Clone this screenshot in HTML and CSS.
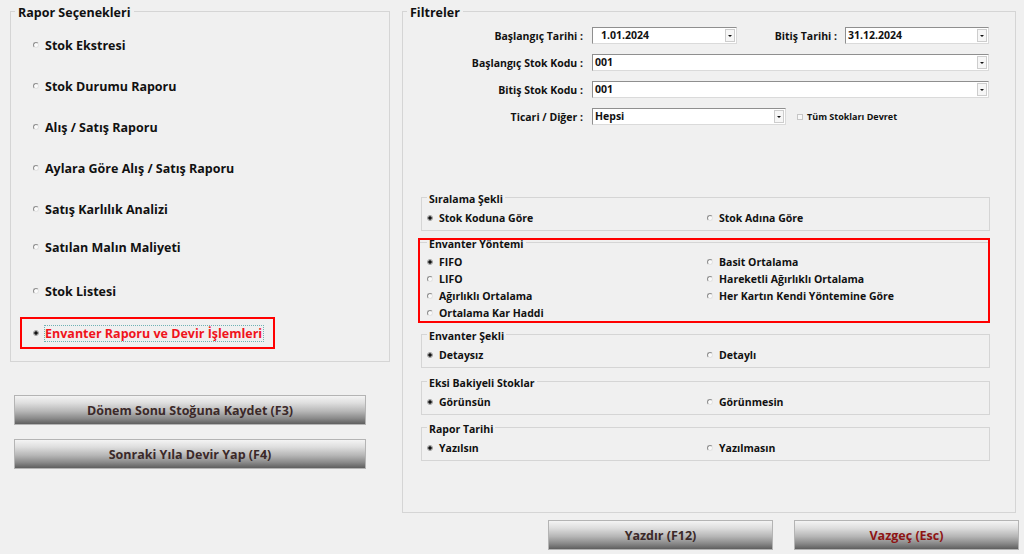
FILE: index.html
```html
<!DOCTYPE html>
<html lang="tr">
<head>
<meta charset="utf-8">
<title>Envanter Raporu</title>
<link rel="stylesheet" href="styles.css">
</head>
<body>
<div class="window">
  <div class="main">
    <div class="left-col">
      <fieldset class="group">
        <legend>Rapor Seçenekleri</legend>
        <div class="report-list">
          <div class="report-item"><span class="radio"></span>Stok Ekstresi</div>
          <div class="report-item"><span class="radio"></span>Stok Durumu Raporu</div>
          <div class="report-item"><span class="radio"></span>Alış / Satış Raporu</div>
          <div class="report-item"><span class="radio"></span>Aylara Göre Alış / Satış Raporu</div>
          <div class="report-item"><span class="radio"></span>Satış Karlılık Analizi</div>
          <div class="report-item report-item--up"><span class="radio"></span>Satılan Malın Maliyeti</div>
          <div class="report-item report-item--down"><span class="radio"></span>Stok Listesi</div>
          <div class="report-selected"><span class="radio checked"></span><span class="focus">Envanter Raporu ve Devir İşlemleri</span></div>
        </div>
      </fieldset>
      <button class="btn btn-side btn-first">Dönem Sonu Stoğuna Kaydet (F3)</button>
      <button class="btn btn-side btn-second">Sonraki Yıla Devir Yap (F4)</button>
    </div>

    <fieldset class="group group-filters">
      <legend>Filtreler</legend>
      <div class="filters-body">
        <div class="filter-form">
          <div class="frow">
            <span class="flabel">Başlangıç Tarihi :</span>
            <div class="combo combo-date combo-pad"><span class="combo-text">1.01.2024</span><span class="combo-btn"></span></div>
            <span class="flabel flabel-end">Bitiş Tarihi :</span>
            <div class="combo combo-date2"><span class="combo-text">31.12.2024</span><span class="combo-btn"></span></div>
          </div>
          <div class="frow">
            <span class="flabel">Başlangıç Stok Kodu :</span>
            <div class="combo combo-full"><span class="combo-text">001</span><span class="combo-btn"></span></div>
          </div>
          <div class="frow">
            <span class="flabel">Bitiş Stok Kodu :</span>
            <div class="combo combo-full"><span class="combo-text">001</span><span class="combo-btn"></span></div>
          </div>
          <div class="frow">
            <span class="flabel">Ticari / Diğer :</span>
            <div class="combo combo-mid"><span class="combo-text">Hepsi</span><span class="combo-btn"></span></div>
            <span class="check"></span><span class="check-label">Tüm Stokları Devret</span>
          </div>
        </div>

        <fieldset class="subgroup subgroup-first">
          <legend>Sıralama Şekli</legend>
          <div class="opts">
            <div class="opt"><span class="radio checked"></span>Stok Koduna Göre</div>
            <div class="opt"><span class="radio"></span>Stok Adına Göre</div>
          </div>
        </fieldset>

        <div class="highlight">
          <fieldset class="subgroup-inner">
            <legend>Envanter Yöntemi</legend>
            <div class="opts opts-method">
              <div class="opt"><span class="radio checked"></span>FIFO</div>
              <div class="opt"><span class="radio"></span>LIFO</div>
              <div class="opt"><span class="radio"></span>Ağırlıklı Ortalama</div>
              <div class="opt"><span class="radio"></span>Ortalama Kar Haddi</div>
              <div class="opt"><span class="radio"></span>Basit Ortalama</div>
              <div class="opt"><span class="radio"></span>Hareketli Ağırlıklı Ortalama</div>
              <div class="opt"><span class="radio"></span>Her Kartın Kendi Yöntemine Göre</div>
            </div>
          </fieldset>
        </div>

        <fieldset class="subgroup subgroup-shape">
          <legend>Envanter Şekli</legend>
          <div class="opts">
            <div class="opt"><span class="radio checked"></span>Detaysız</div>
            <div class="opt"><span class="radio"></span>Detaylı</div>
          </div>
        </fieldset>

        <fieldset class="subgroup subgroup-neg">
          <legend>Eksi Bakiyeli Stoklar</legend>
          <div class="opts">
            <div class="opt"><span class="radio checked"></span>Görünsün</div>
            <div class="opt"><span class="radio"></span>Görünmesin</div>
          </div>
        </fieldset>

        <fieldset class="subgroup subgroup-date">
          <legend>Rapor Tarihi</legend>
          <div class="opts">
            <div class="opt"><span class="radio checked"></span>Yazılsın</div>
            <div class="opt"><span class="radio"></span>Yazılmasın</div>
          </div>
        </fieldset>
      </div>
    </fieldset>
  </div>

  <div class="footer">
    <button class="btn btn-foot">Yazdır (F12)</button>
    <button class="btn btn-foot btn-cancel">Vazgeç (Esc)</button>
  </div>
</div>
</body>
</html>
```

FILE: styles.css
```css
html, body {
  margin: 0;
  padding: 0;
}

body {
  background: #f0f0f0;
  font-family: "Open Sans", "Noto Sans", sans-serif;
  color: #111;
}

.window {
  width: 1024px;
  height: 554px;
  box-sizing: border-box;
  padding: 2px 5px 0 10px;
  display: flex;
  flex-direction: column;
  overflow: hidden;
}

.main {
  display: flex;
  align-items: flex-start;
  gap: 12px;
}

.left-col {
  width: 380px;
  display: flex;
  flex-direction: column;
}

/* group boxes */
.group {
  margin: 0;
  padding: 0;
  min-width: 0;
  border: 1px solid #d5d5d5;
  box-sizing: border-box;
}

.group > legend {
  font-size: 12.5px;
  font-weight: 700;
  line-height: 16px;
  padding: 3px 3px 0;
  margin-left: 4px;
}

/* report list */
.report-list {
  display: flex;
  flex-direction: column;
  gap: 21px;
  padding: 14px 0 12px 22px;
}

.report-item {
  display: flex;
  align-items: center;
  gap: 6px;
  height: 20px;
  font-size: 12.5px;
  font-weight: 700;
}

.report-item--up {
  margin-top: -3px;
}

.report-item--down {
  margin-top: 3px;
}

.report-selected {
  display: flex;
  align-items: center;
  gap: 5px;
  width: 255px;
  height: 32px;
  box-sizing: border-box;
  margin: -5px 0 0 -13px;
  padding-left: 11px;
  border: 2px solid #ff0000;
  font-size: 12.5px;
  font-weight: 700;
  color: #f0141c;
}

.focus {
  border: 1px dotted #6fb2b4;
  line-height: 15px;
  padding-right: 1px;
}

/* radios & checkbox */
.radio {
  flex: none;
  width: 6px;
  height: 6px;
  box-sizing: border-box;
  border-radius: 50%;
  border: 1px solid;
  border-color: #8e8e8e #e4e4e4 #e4e4e4 #8e8e8e;
  background: #fbfbfb;
}

.radio.checked {
  border-color: #9a9a9a;
  background: radial-gradient(circle, #111 0, #111 1.4px, #d8d8d8 2.2px);
}

.check {
  width: 6px;
  height: 6px;
  box-sizing: border-box;
  border: 1px solid #c6c6c6;
  background: #f8f8f8;
  margin-left: 11px;
}

.check-label {
  margin-left: 4px;
  font-size: 9px;
  font-weight: 700;
}

/* buttons */
.btn {
  display: block;
  margin: 0;
  padding: 0;
  height: 30px;
  box-sizing: border-box;
  border: 1px solid #b4b4b4;
  background: linear-gradient(#f4f4f4 0%, #dedede 25%, #b6b6b6 55%, #8a8a8a 80%, #5f5f5f 100%);
  font-family: "Open Sans", "Noto Sans", sans-serif;
  font-size: 12.5px;
  font-weight: 700;
  color: #3b2929;
  text-align: center;
}

.btn-side {
  width: 352px;
  margin-left: 4px;
}

.btn-first {
  margin-top: 33px;
}

.btn-second {
  margin-top: 14px;
}

/* filters */
.group-filters {
  width: 614px;
}

.filters-body {
  padding: 6px 0 51px 0;
}

.filter-form {
  display: flex;
  flex-direction: column;
  gap: 10px;
}

.frow {
  display: flex;
  align-items: center;
  height: 17px;
}

.flabel {
  width: 180px;
  margin-right: 9px;
  text-align: right;
  font-size: 10.5px;
  font-weight: 700;
  white-space: nowrap;
}

.flabel-end {
  width: 100px;
  margin-right: 8px;
}

.combo {
  display: flex;
  align-items: center;
  height: 17px;
  box-sizing: border-box;
  border: 1px solid;
  border-color: #8f8f8f #dadada #dadada #8f8f8f;
  background: #fff;
}

.combo-text {
  flex: 1;
  padding-left: 2px;
  font-size: 10.5px;
  font-weight: 700;
  line-height: 15px;
  white-space: nowrap;
}

.combo-pad .combo-text {
  padding-left: 8px;
}

.combo-btn {
  position: relative;
  width: 10px;
  height: 13px;
  box-sizing: border-box;
  margin-right: 1px;
  border: 1px solid #cdcdcd;
  background: #f6f6f6;
}

.combo-btn::after {
  content: "";
  position: absolute;
  left: 2px;
  top: 5px;
  border-left: 2px solid transparent;
  border-right: 2px solid transparent;
  border-top: 2px solid #111;
}

.combo-date {
  width: 145px;
}

.combo-date2 {
  width: 144px;
}

.combo-full {
  width: 397px;
}

.combo-mid {
  width: 194px;
}

/* sub group boxes */
.subgroup {
  margin: 0 0 0 18px;
  padding: 0;
  width: 569px;
  min-width: 0;
  box-sizing: border-box;
  border: 1px solid #d5d5d5;
}

.subgroup > legend,
.subgroup-inner > legend {
  font-size: 10.5px;
  font-weight: 700;
  line-height: 14px;
  padding: 4px 2px 0;
  margin-left: 5px;
}

.subgroup-first {
  margin-top: 63px;
}

.subgroup-shape {
  margin-top: 2px;
}

.subgroup-neg {
  margin-top: 4px;
}

.subgroup-date {
  margin-top: 3px;
}

.opts {
  display: grid;
  grid-template-columns: 280px 1fr;
  grid-auto-rows: 16px;
  padding: 4px 0 4px 5px;
}

.opt {
  display: flex;
  align-items: center;
  gap: 6px;
  font-size: 10.5px;
  font-weight: 700;
  white-space: nowrap;
}

.highlight {
  margin: 7px 0 0 15px;
  width: 572px;
  box-sizing: border-box;
  border: 2px solid #ff0000;
}

.subgroup-inner {
  margin: -7px 0 0 0;
  padding: 0;
  min-width: 0;
  border: 0;
  border-top: 1px solid #d5d5d5;
}

.subgroup-inner > legend {
  margin-left: 7px;
}

.opts-method {
  grid-template-rows: repeat(4, 17px);
  grid-auto-rows: 17px;
  grid-auto-flow: column;
  padding: 2px 0 0 7px;
}

/* footer */
.footer {
  display: flex;
  justify-content: flex-end;
  gap: 21px;
  margin-top: 7px;
}

.btn-foot {
  width: 225px;
}

.btn-cancel {
  color: #8e1414;
}
```
